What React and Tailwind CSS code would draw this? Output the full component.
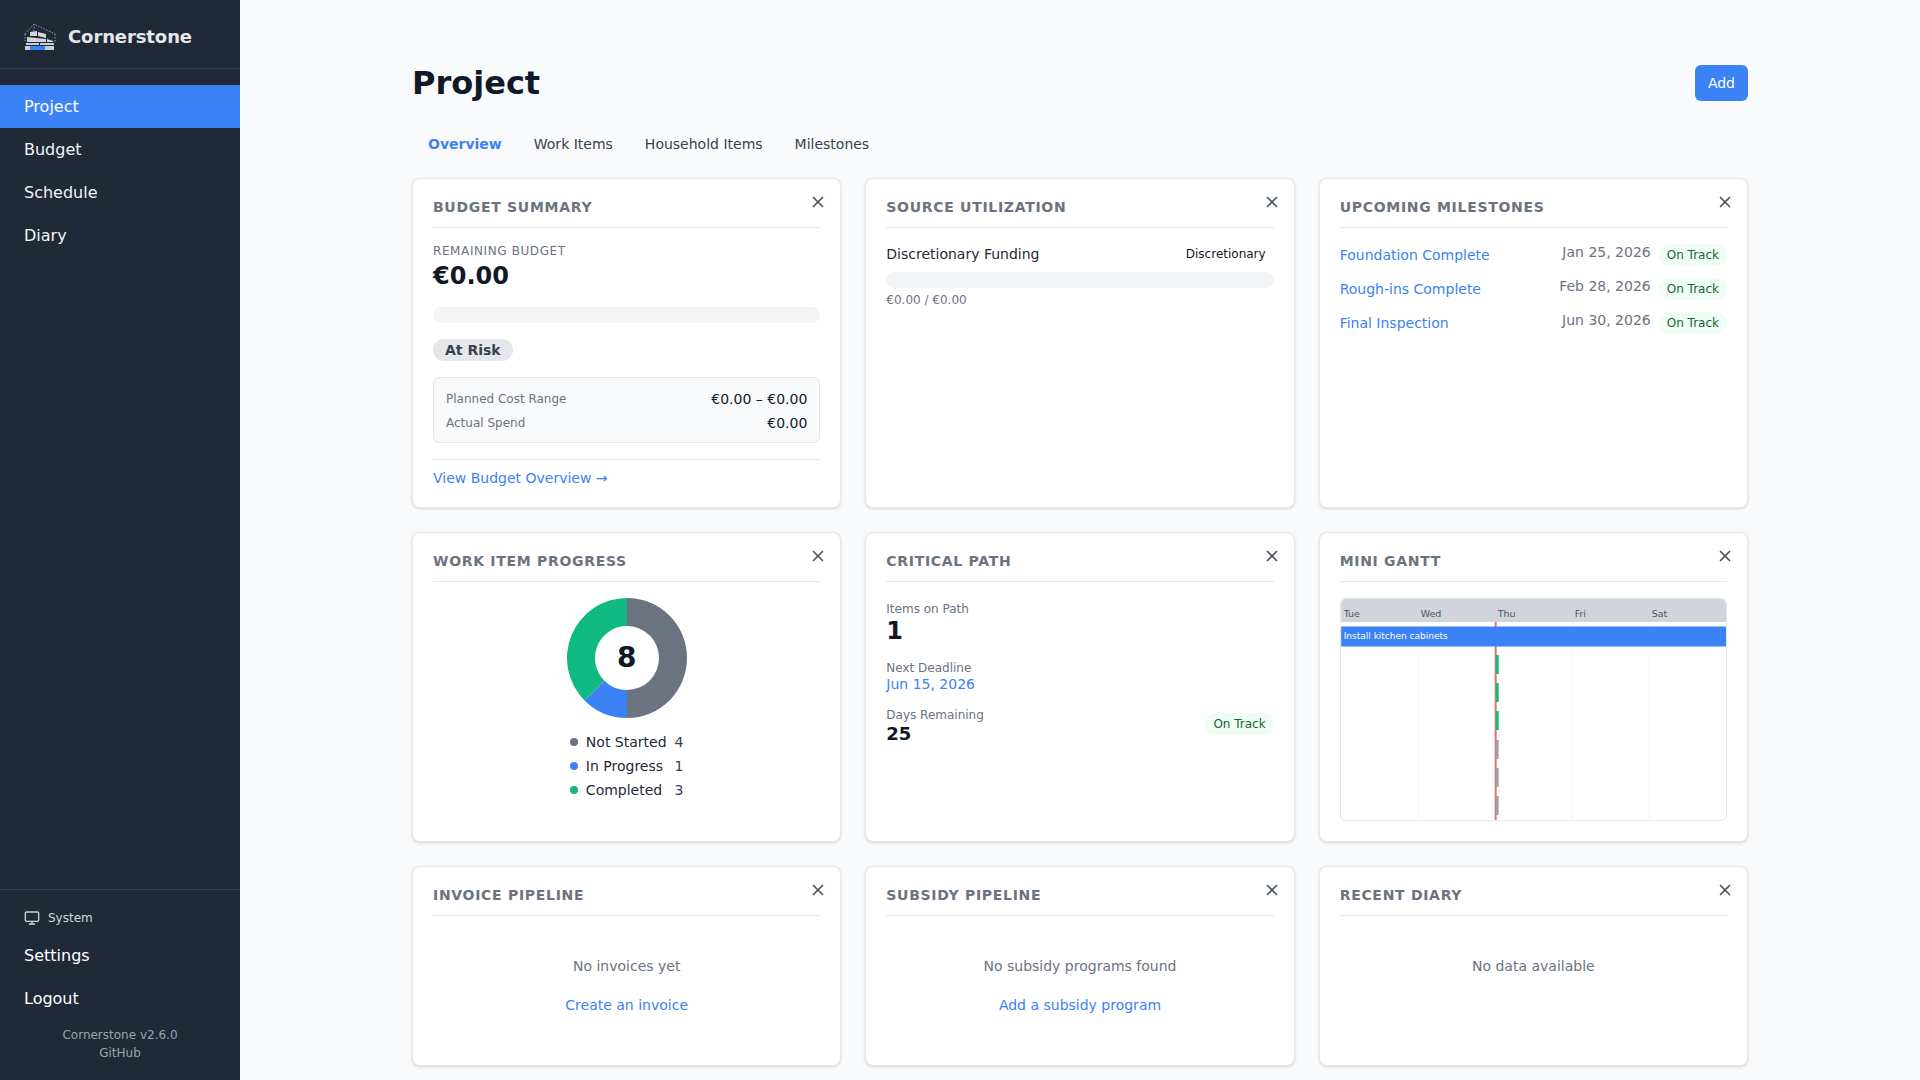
import React from "react";
import { Monitor, X } from "lucide-react";

const cardTitle = "text-sm font-bold uppercase tracking-[0.7px] text-[#6b7280]";
const link = "text-[#3b82f6]";

function Logo() {
  return (
    <svg width="32" height="28" viewBox="0 0 32 28" className="shrink-0">
      <path d="M1 11 L10 1 L31 11 M10 1 L10 9 M31 11 L31 20 M1 11 L1 18" fill="none" stroke="#9ca3af" strokeWidth="1" strokeDasharray="1.5 1.5" />
      <path d="M6 9 L13 8 L13 13 L6 13 Z M14 9 L22 11 L22 15 L14 13 Z" fill="#d1d5db" />
      <path d="M3 14 L22 16 L22 19 L3 19 Z M23 16 L29 18 L29 19 L23 19 Z" fill="#d1d5db" />
      <path d="M2 20 L15 20 L15 22 L2 22 Z M16 20 L30 20 L30 22 L16 22 Z" fill="#c9cdd3" />
      <path d="M1 23 L6 23 L6 27 L1 27 Z M21 23 L30 23 L30 27 L21 27 Z" fill="#c9cdd3" />
      <path d="M6 23 L21 23 L21 27 L6 27 Z" fill="#3b82f6" />
    </svg>
  );
}

function Card({ title, className = "", children }) {
  return (
    <div className={`relative rounded-lg border border-[#e5e7eb] bg-white px-5 pt-5 shadow-[0_1px_3px_rgba(0,0,0,0.15)] ${className}`}>
      <button className="absolute right-[13px] top-[14px] text-[#4b5563]">
        <X size={18} strokeWidth={2.25} />
      </button>
      <div className="border-b border-[#e5e7eb] pb-[11px]">
        <h3 className={`${cardTitle} leading-[17px]`}>{title}</h3>
      </div>
      {children}
    </div>
  );
}

function Badge({ children, className = "" }) {
  return (
    <span className={`inline-flex h-[22px] items-center rounded-full bg-[#f0fdf4] px-2 text-xs text-[#166534] ${className}`}>
      {children}
    </span>
  );
}

function BudgetSummary() {
  return (
    <Card title="Budget Summary">
      <p className="mt-4 text-xs uppercase leading-[15px] tracking-[0.6px] text-[#6b7280]">Remaining Budget</p>
      <p className="text-2xl font-bold leading-[34px] text-[#111827]">€0.00</p>
      <div className="mt-[14px] h-4 rounded-full bg-[#f3f4f6]" />
      <span className="mt-4 inline-flex h-[22px] items-center rounded-full bg-[#e5e7eb] px-3 text-sm font-bold text-[#374151]">At Risk</span>
      <div className="mt-[15px] rounded-md border border-[#e5e7eb] bg-[#f9fafb] px-3 pt-[9px] pb-[7px]">
        <div className="flex h-6 items-center justify-between">
          <span className="text-xs text-[#6b7280]">Planned Cost Range</span>
          <span className="text-sm text-[#111827]">€0.00 – €0.00</span>
        </div>
        <div className="flex h-6 items-center justify-between">
          <span className="text-xs text-[#6b7280]">Actual Spend</span>
          <span className="text-sm text-[#111827]">€0.00</span>
        </div>
      </div>
      <div className="mt-4 border-t border-[#e5e7eb] pt-[6px] pb-5">
        <a className={`text-sm leading-[17px] ${link}`}>View Budget Overview →</a>
      </div>
    </Card>
  );
}

function SourceUtilization() {
  return (
    <Card title="Source Utilization">
      <div className="mt-4 flex items-center justify-between pr-2">
        <span className="text-sm text-[#1f2937]">Discretionary Funding</span>
        <span className="text-xs text-[#111827]">Discretionary</span>
      </div>
      <div className="mt-2 h-4 rounded-full bg-[#f3f4f6]" />
      <p className="mt-1 text-xs text-[#6b7280]">€0.00 / €0.00</p>
    </Card>
  );
}

const milestones = [
  { name: "Foundation Complete", date: "Jan 25, 2026" },
  { name: "Rough-ins Complete", date: "Feb 28, 2026" },
  { name: "Final Inspection", date: "Jun 30, 2026" },
];

function UpcomingMilestones() {
  return (
    <Card title="Upcoming Milestones">
      <ul className="mt-4 flex flex-col gap-3">
        {milestones.map((m) => (
          <li key={m.name} className="flex h-[22px] items-center">
            <a className={`flex-1 text-sm ${link}`}>{m.name}</a>
            <span className="mr-2 -translate-y-[3px] text-sm text-[#6b7280]">{m.date}</span>
            <Badge>On Track</Badge>
          </li>
        ))}
      </ul>
    </Card>
  );
}

const legend = [
  { label: "Not Started", count: 4, color: "bg-[#6b7280]" },
  { label: "In Progress", count: 1, color: "bg-[#3b82f6]" },
  { label: "Completed", count: 3, color: "bg-[#10b981]" },
];

function WorkItemProgress() {
  return (
    <Card title="Work Item Progress">
      <div className="mt-4 flex flex-col items-center">
        <div className="relative h-[120px] w-[120px]">
          <svg viewBox="0 0 120 120" width="120" height="120">
            <path d="M60 0 A60 60 0 0 1 60 120 L60 92 A32 32 0 0 0 60 28 Z" fill="#6b7280" />
            <path d="M60 120 A60 60 0 0 1 17.57 102.43 L37.37 82.63 A32 32 0 0 0 60 92 Z" fill="#3b82f6" />
            <path d="M17.57 102.43 A60 60 0 0 1 60 0 L60 28 A32 32 0 0 0 37.37 82.63 Z" fill="#10b981" />
          </svg>
          <span className="absolute inset-0 flex items-center justify-center text-[28px] font-bold text-[#111827]">8</span>
        </div>
        <div className="mt-3 grid grid-cols-[8px_auto_auto] items-center gap-x-2 text-sm leading-6 text-[#1f2937]">
          {legend.map((l) => (
            <React.Fragment key={l.label}>
              <span className={`h-2 w-2 rounded-full ${l.color}`} />
              <span>{l.label}</span>
              <span className="text-[#374151]">{l.count}</span>
            </React.Fragment>
          ))}
        </div>
      </div>
    </Card>
  );
}

function CriticalPath() {
  return (
    <Card title="Critical Path">
      <p className="mt-[20px] text-xs leading-[15px] text-[#6b7280]">Items on Path</p>
      <p className="text-2xl font-bold leading-[28px] text-[#111827]">1</p>
      <p className="mt-4 text-xs leading-[15px] text-[#6b7280]">Next Deadline</p>
      <a className={`block text-sm leading-[17px] ${link}`}>Jun 15, 2026</a>
      <div className="mt-[15px] flex items-center justify-between">
        <div>
          <p className="text-xs leading-[15px] text-[#6b7280]">Days Remaining</p>
          <p className="text-lg font-bold leading-[21px] text-[#111827]">25</p>
        </div>
        <Badge className="mb-[5px]">On Track</Badge>
      </div>
    </Card>
  );
}

function MiniGantt() {
  const days = ["Tue", "Wed", "Thu", "Fri", "Sat"];
  const bars = [
    { y: 56, fill: "#10b981" },
    { y: 84, fill: "#10b981" },
    { y: 112, fill: "#10b981" },
    { y: 141, fill: "#9ca3af" },
    { y: 169, fill: "#9ca3af" },
    { y: 197, fill: "#9ca3af" },
  ];
  return (
    <Card title="Mini Gantt">
      <div className="mt-4 overflow-hidden rounded-md border border-[#e5e7eb]">
        <svg viewBox="0 0 385 221" width="100%" height="221" className="block">
          <rect width="385" height="23" fill="#d1d5db" />
          {days.map((d, i) => (
            <g key={d}>
              {i > 0 && <line x1={77 * i} x2={77 * i} y1="23" y2="221" stroke="#f3f4f6" />}
              <text x={77 * i + 2.5} y="18" fontSize="9.5" fill="#4b5563">{d}</text>
            </g>
          ))}
          <rect x="153.5" y="23" width="2" height="198" fill="#e57373" />
          <rect y="27.5" width="385" height="20" fill="#3b82f6" />
          <text x="2.5" y="37.5" dominantBaseline="middle" fontSize="9" fill="#ffffff">Install kitchen cabinets</text>
          {bars.map((b) => (
            <rect key={b.y} x="154.5" y={b.y} width="3" height="19" rx="0.5" fill={b.fill} />
          ))}
        </svg>
      </div>
    </Card>
  );
}

function EmptyState({ text, action }) {
  return (
    <div className="flex h-[149px] flex-col items-center pt-[42px] text-sm">
      <p className="leading-[17px] text-[#6b7280]">{text}</p>
      {action && <a className={`mt-[22px] leading-[17px] ${link}`}>{action}</a>}
    </div>
  );
}

export default function App() {
  return (
    <div className="flex h-screen overflow-hidden bg-[#f9fafb] font-['DejaVu_Sans',sans-serif]">
      <aside className="flex w-[240px] shrink-0 flex-col bg-[#1f2937] text-[#f3f4f6]">
        <div className="flex h-[69px] items-center gap-3 border-b border-[#374151] px-6 pt-[5px]">
          <Logo />
          <span className="text-lg font-bold tracking-[-0.1px] text-[#e5e7eb]">Cornerstone</span>
        </div>
        <nav className="mt-4 flex flex-col">
          <a className="flex h-[43px] items-center bg-[#3b82f6] px-6 text-white">Project</a>
          <a className="flex h-[43px] items-center px-6">Budget</a>
          <a className="flex h-[43px] items-center px-6">Schedule</a>
          <a className="flex h-[43px] items-center px-6">Diary</a>
        </nav>
        <div className="mt-auto border-t border-[#374151] pb-[18px]">
          <div className="mt-[19px] flex items-center gap-2 px-6 text-xs leading-[18px] text-[#d1d5db]">
            <Monitor size={16} />
            System
          </div>
          <a className="mt-[7px] flex h-[43px] items-center px-6 text-white">Settings</a>
          <a className="flex h-[43px] items-center px-6 text-white">Logout</a>
          <div className="mt-[6px] text-center text-xs leading-[18px] text-[#9ca3af]">
            <p>Cornerstone v2.6.0</p>
            <p>GitHub</p>
          </div>
        </div>
      </aside>

      <main className="flex-1 overflow-hidden">
        <div className="mx-auto max-w-[1400px] px-8 pt-[65px]">
          <div className="flex h-9 items-center justify-between">
            <h1 className="text-[32px] font-bold text-[#111827]">Project</h1>
            <button className="h-9 rounded-md bg-[#3b82f6] px-[13px] text-sm text-white">Add</button>
          </div>
          <div className="mt-[26px] flex h-[34px] items-center gap-8 px-4 text-sm text-[#374151]">
            <a className="font-bold text-[#3b82f6]">Overview</a>
            <a>Work Items</a>
            <a>Household Items</a>
            <a>Milestones</a>
          </div>
          <div className="mt-[17px] grid grid-cols-3 grid-rows-[330px_310px_auto] gap-6">
            <BudgetSummary />
            <SourceUtilization />
            <UpcomingMilestones />
            <WorkItemProgress />
            <CriticalPath />
            <MiniGantt />
            <Card title="Invoice Pipeline"><EmptyState text="No invoices yet" action="Create an invoice" /></Card>
            <Card title="Subsidy Pipeline"><EmptyState text="No subsidy programs found" action="Add a subsidy program" /></Card>
            <Card title="Recent Diary"><EmptyState text="No data available" /></Card>
          </div>
        </div>
      </main>
    </div>
  );
}
